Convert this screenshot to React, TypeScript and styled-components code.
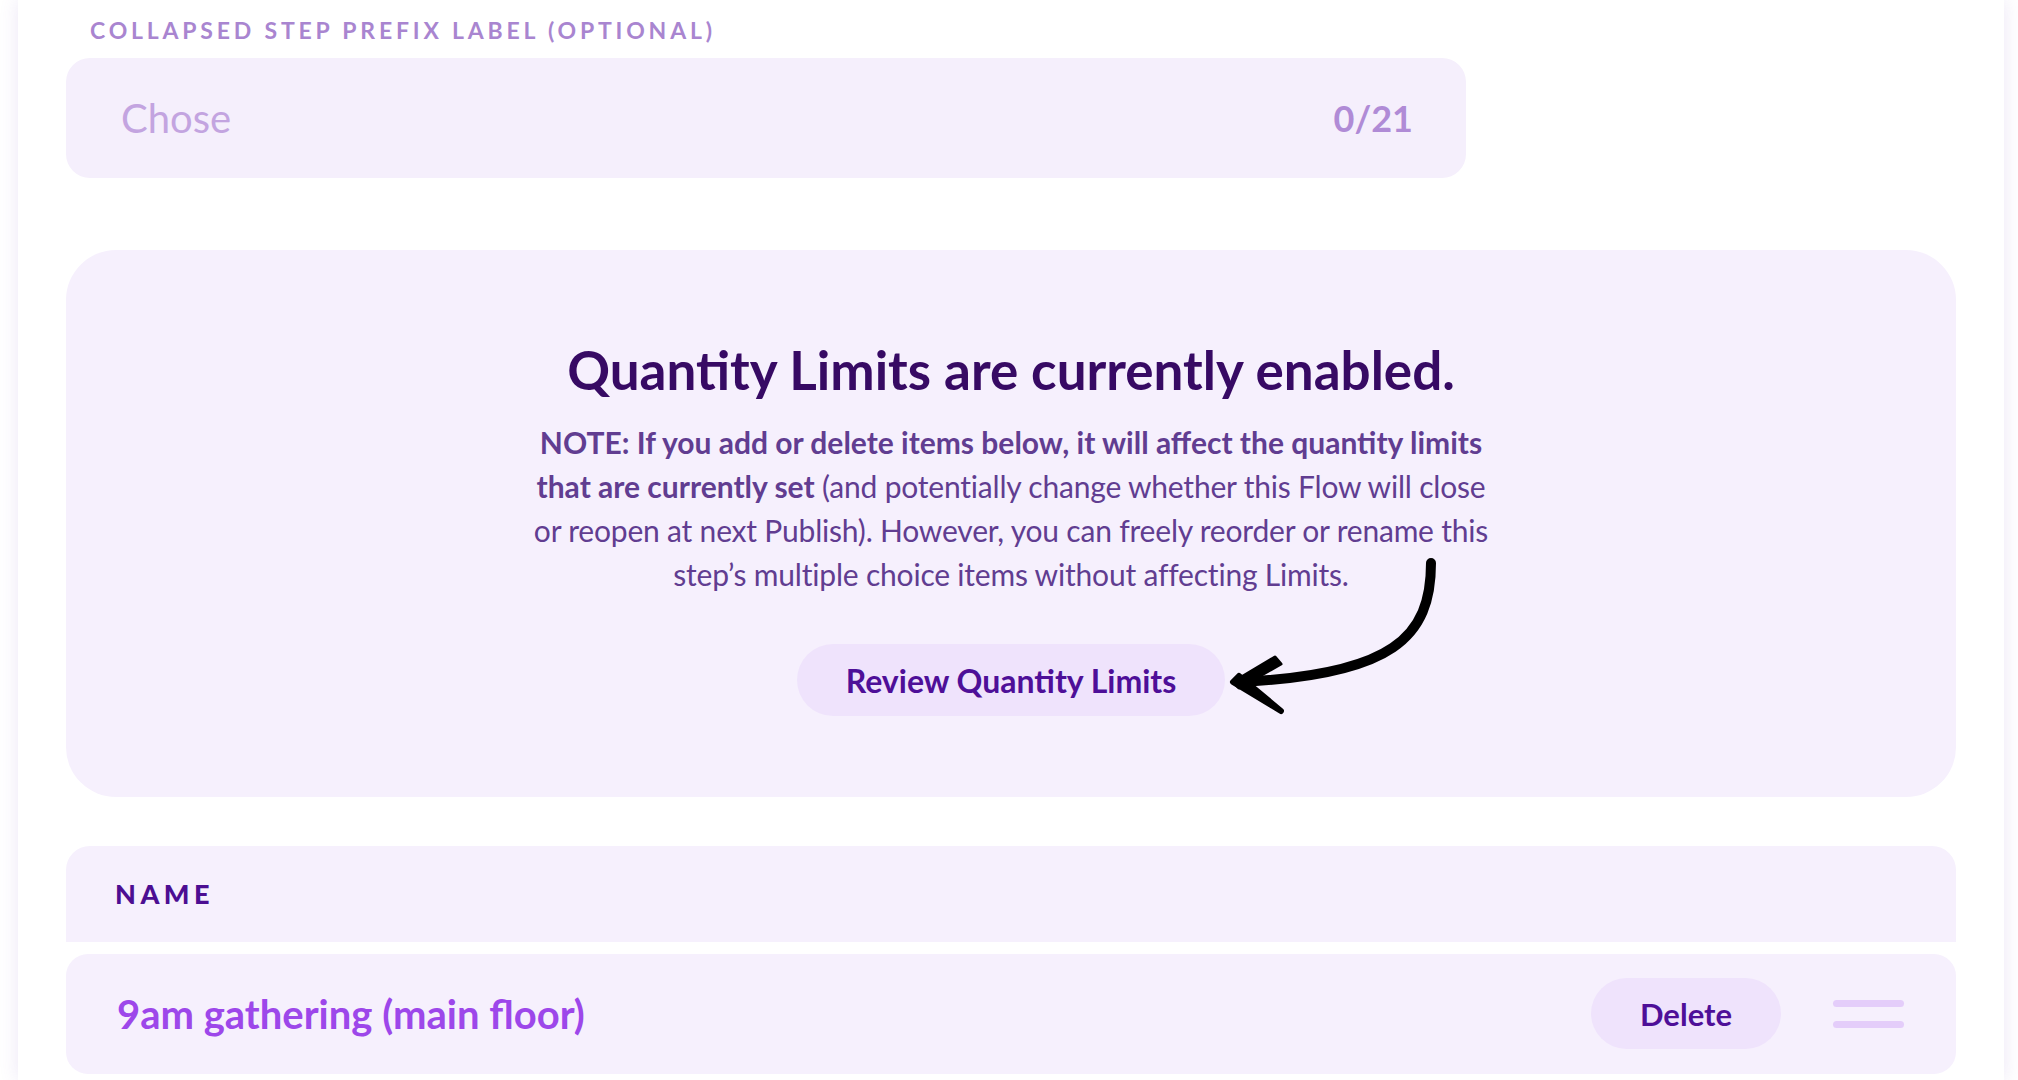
import React from "react";
import styled, { createGlobalStyle } from "styled-components";

const GlobalStyle = createGlobalStyle`
  html, body {
    margin: 0;
    padding: 0;
    background: #ffffff;
    font-family: Lato, "Open Sans", Arial, sans-serif;
  }
  * {
    box-sizing: border-box;
  }
`;

const Page = styled.div`
  width: 2018px;
  height: 1080px;
  overflow: hidden;
  padding: 0 14px 0 18px;
`;

const Card = styled.div`
  background: #ffffff;
  min-height: 1080px;
  padding: 17px 48px 0 48px;
  box-shadow: 0 0 18px rgba(120, 80, 190, 0.14);
`;

const FieldLabel = styled.div`
  font-size: 23px;
  font-weight: 700;
  line-height: 1.2;
  letter-spacing: 3.8px;
  text-transform: uppercase;
  color: #a985d0;
  padding-left: 24px;
`;

const InputBox = styled.div`
  margin-top: 13px;
  width: 1400px;
  height: 120px;
  border-radius: 24px;
  background: #f5effc;
  display: flex;
  align-items: center;
  justify-content: space-between;
  padding: 0 53px 0 55px;
`;

const Placeholder = styled.span`
  font-size: 40px;
  color: #c3a4e0;
`;

const Counter = styled.span`
  font-size: 36px;
  font-weight: 700;
  color: #b08bd6;
`;

const LimitsPanel = styled.section`
  margin-top: 72px;
  height: 547px;
  border-radius: 50px;
  background: #f6f0fd;
  padding-top: 88px;
  display: flex;
  flex-direction: column;
  align-items: center;
`;

const PanelTitle = styled.h2`
  margin: 0;
  font-size: 53px;
  font-weight: 700;
  line-height: 1.2;
  color: #370a64;
`;

const Note = styled.p`
  margin: 19px 0 0;
  font-size: 30px;
  line-height: 44px;
  color: #613d91;
  text-align: center;
  white-space: nowrap;
  letter-spacing: -0.2px;
  b {
    font-weight: 700;
    letter-spacing: 0;
  }
`;

const ButtonWrap = styled.div`
  position: relative;
  margin-top: 48px;
`;

const PillButton = styled.button<{ $width: number; $height: number; $size: number }>`
  width: ${(p) => p.$width}px;
  height: ${(p) => p.$height}px;
  border: none;
  border-radius: ${(p) => p.$height / 2}px;
  background: #efe3fc;
  color: #4e0f98;
  font-family: Lato, "Open Sans", Arial, sans-serif;
  font-size: ${(p) => p.$size}px;
  font-weight: 700;
  padding: 0;
  cursor: pointer;
`;

const Arrow = styled.svg`
  position: absolute;
  left: 100%;
  top: -89px;
  overflow: visible;
`;

const TableHeader = styled.div`
  margin-top: 49px;
  height: 96px;
  border-radius: 24px 24px 0 0;
  background: #f6f0fd;
  display: flex;
  align-items: center;
  padding-left: 49px;
`;

const HeaderLabel = styled.span`
  font-size: 27px;
  font-weight: 900;
  letter-spacing: 4.5px;
  color: #4c0e92;
`;

const ItemRow = styled.div`
  margin-top: 12px;
  height: 120px;
  border-radius: 22px;
  background: #f6f0fd;
  display: flex;
  align-items: center;
  padding: 0 52px 0 51px;
`;

const ItemName = styled.span`
  flex: 1;
  font-size: 40px;
  font-weight: 700;
  color: #9d47ea;
`;

const DragHandle = styled.div`
  margin-left: 52px;
  width: 71px;
  display: flex;
  flex-direction: column;
  gap: 14px;
  span {
    display: block;
    height: 7px;
    border-radius: 4px;
    background: #e4cdfa;
  }
`;

export default function App() {
  return (
    <Page>
      <GlobalStyle />
      <Card>
        <FieldLabel>Collapsed step prefix label (optional)</FieldLabel>
        <InputBox>
          <Placeholder>Chose</Placeholder>
          <Counter>0/21</Counter>
        </InputBox>

        <LimitsPanel>
          <PanelTitle>Quantity Limits are currently enabled.</PanelTitle>
          <Note>
            <b>NOTE: If you add or delete items below, it will affect the quantity limits</b>
            <br />
            <b>that are currently set</b> (and potentially change whether this Flow will close
            <br />
            or reopen at next Publish). However, you can freely reorder or rename this
            <br />
            step’s multiple choice items without affecting Limits.
          </Note>
          <ButtonWrap>
            <PillButton $width={428} $height={72} $size={32}>
              Review Quantity Limits
            </PillButton>
            <Arrow width="220" height="160" viewBox="0 0 220 160">
              <path
                d="M206 8 C206 82 168 120 14 127"
                fill="none"
                stroke="#000"
                strokeWidth="10"
                strokeLinecap="round"
              />
              <path d="M50 102 L8 127 L14 133 L56 109 Z" fill="#000" stroke="#000" strokeWidth="3" strokeLinejoin="round" />
              <path d="M8 127 L56 156 L14 121 Z" fill="#000" stroke="#000" strokeWidth="6" strokeLinejoin="round" />
            </Arrow>
          </ButtonWrap>
        </LimitsPanel>

        <TableHeader>
          <HeaderLabel>NAME</HeaderLabel>
        </TableHeader>
        <ItemRow>
          <ItemName>9am gathering (main floor)</ItemName>
          <PillButton $width={190} $height={71} $size={31}>
            Delete
          </PillButton>
          <DragHandle>
            <span />
            <span />
          </DragHandle>
        </ItemRow>
      </Card>
    </Page>
  );
}
